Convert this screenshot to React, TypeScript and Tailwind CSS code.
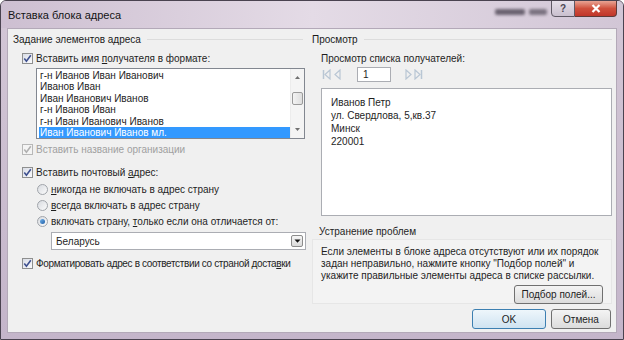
import React from "react";

function Check({ checked = false, disabled = false }: { checked?: boolean; disabled?: boolean }) {
  return (
    <span
      className={`w-[11px] h-[11px] shrink-0 border flex items-center justify-center ${
        disabled ? "border-[#b8b8b8] bg-[#f4f4f4]" : "border-[#8e8f8f] bg-gradient-to-br from-[#d9dde6] to-[#fbfbfd]"
      }`}
    >
      {checked && (
        <svg width="9" height="9" viewBox="0 0 9 9">
          <path
            d="M1.3 4.6 L3.4 7.2 L7.8 1.2"
            stroke={disabled ? "#b0b0b0" : "#3d4f8e"}
            strokeWidth="1.6"
            fill="none"
          />
        </svg>
      )}
    </span>
  );
}

function Radio({ checked = false }: { checked?: boolean }) {
  return (
    <span className="w-[11px] h-[11px] shrink-0 rounded-full border border-[#a0a4aa] bg-gradient-to-br from-[#d8dbe0] to-[#fbfbfb] flex items-center justify-center">
      {checked && <span className="w-[5px] h-[5px] rounded-full bg-gradient-to-br from-[#74b4ea] to-[#1f5fa8]" />}
    </span>
  );
}

function NavIcon({ kind }: { kind: "first" | "prev" | "next" | "last" }) {
  const c = "#b9c6d4";
  return (
    <svg width="9" height="11" viewBox="0 0 9 11">
      {kind === "first" && (
        <>
          <line x1="1.5" y1="1" x2="1.5" y2="10" stroke={c} strokeWidth="1.5" />
          <path d="M8 1 L3 5.5 L8 10 Z" fill="none" stroke={c} strokeWidth="1.2" />
        </>
      )}
      {kind === "prev" && <path d="M7 1 L2 5.5 L7 10 Z" fill="none" stroke={c} strokeWidth="1.2" />}
      {kind === "next" && <path d="M2 1 L7 5.5 L2 10 Z" fill="none" stroke={c} strokeWidth="1.2" />}
      {kind === "last" && (
        <>
          <path d="M1 1 L6 5.5 L1 10 Z" fill="none" stroke={c} strokeWidth="1.2" />
          <line x1="7.5" y1="1" x2="7.5" y2="10" stroke={c} strokeWidth="1.5" />
        </>
      )}
    </svg>
  );
}

const listItems = [
  "г-н Иванов Иван Иванович",
  "Иванов Иван",
  "Иван Иванович Иванов",
  "г-н Иванов Иван",
  "г-н Иван Иванович Иванов",
  "Иван Иванович Иванов мл.",
];

export default function App() {
  return (
    <div
      className="w-[624px] h-[340px] overflow-hidden relative rounded-t-[6px] border border-[#4a4350] bg-gradient-to-b from-[#d3c7d6] to-[#c4b5ca] flex flex-col text-[10px] text-[#1e1e1e]"
      style={{ fontFamily: "'Liberation Sans', Arial, sans-serif" }}
    >
      {/* Title bar */}
      <div className="h-[27px] shrink-0 relative bg-gradient-to-r from-[#cdbfd1] via-[#e4dbe6] to-[#d2c6d6]">
        <div className="pl-[7px] pt-[8px] text-[11px] text-[#141414] leading-[13px]">Вставка блока адреса</div>
        {/* blurred window behind the glass */}
        <div className="absolute left-[494px] top-[8px] flex gap-[4px] blur-[1.5px]">
          <div className="w-[30px] h-[6px] rounded-[2px] bg-[#6a6270]" />
          <div className="w-[18px] h-[6px] rounded-[2px] bg-[#7a7280]" />
        </div>
        <div className="absolute right-[6px] top-[-1px] flex">
          <div className="w-[24px] h-[17px] border border-[#5e5864] rounded-bl-[4px] bg-gradient-to-b from-[#e6dfe9] to-[#c9bfce] flex items-center justify-center text-[10px] font-bold text-[#4c4652]">
            ?
          </div>
          <div className="w-[42px] h-[17px] border border-[#5e3a38] border-l-0 rounded-br-[4px] bg-gradient-to-b from-[#e8a394] via-[#cf4f3c] to-[#c0352a] flex items-center justify-center">
            <svg width="10" height="9" viewBox="0 0 10 9">
              <path d="M1.5 1 L8.5 8 M8.5 1 L1.5 8" stroke="#ffffff" strokeWidth="2.2" />
            </svg>
          </div>
        </div>
      </div>

      {/* Content */}
      <div className="mx-[6px] h-[305px] shrink-0 bg-[#f0f0f0] border border-[#b3a9b8] flex">
        {/* Left column */}
        <div className="w-[299px] shrink-0 flex flex-col">
          <div className="h-[14px] mt-[3px] flex items-center pl-[5px]">
            <span className="text-[#1a1a1a]">Задание элементов адреса</span>
            <span className="flex-1 border-t border-[#dcdcdc] ml-[6px] mr-[4px]" />
          </div>
          <div className="h-[14px] mt-[5px] flex items-center pl-[14px] gap-[3px]">
            <Check checked />
            <span>
              Вставить имя <span className="underline">п</span>олучателя в формате:
            </span>
          </div>
          <div className="mt-[3px] ml-[28px] w-[269px] h-[71px] border border-[#828790] bg-white flex">
            <div className="flex-1 flex flex-col pt-[1px] pl-[2px]">
              {listItems.map((t, i) => (
                <div
                  key={t}
                  className={`h-[11.4px] leading-[11.4px] pl-[1px] whitespace-nowrap ${
                    i === listItems.length - 1 ? "bg-[#3399ff] text-white" : "text-[#1e1e1e]"
                  }`}
                >
                  {t}
                </div>
              ))}
            </div>
            <div className="w-[14px] shrink-0 bg-[#f4f4f4] border-l border-[#ececec] flex flex-col items-center">
              <svg width="7" height="14" viewBox="0 0 7 14" className="mt-[1px]">
                <path d="M1 9 L3.5 6 L6 9 Z" fill="#707070" />
              </svg>
              <div className="mt-[8px] w-[11px] h-[13px] border border-[#9a9a9a] rounded-[2px] bg-gradient-to-r from-[#f3f3f3] to-[#dedede]" />
              <div className="flex-1" />
              <svg width="7" height="14" viewBox="0 0 7 14" className="mb-[1px]">
                <path d="M1 5 L3.5 8 L6 5 Z" fill="#707070" />
              </svg>
            </div>
          </div>
          <div className="h-[14px] mt-[3px] flex items-center pl-[14px] gap-[3px] text-[#a0a0a0]">
            <Check checked disabled />
            <span>Вставить название организации</span>
          </div>
          <div className="h-[14px] mt-[9px] flex items-center pl-[14px] gap-[3px]">
            <Check checked />
            <span>
              Вставить почтовый <span className="underline">а</span>дрес:
            </span>
          </div>
          <div className="h-[14px] mt-[3px] flex items-center pl-[29px] gap-[3px]">
            <Radio />
            <span>
              <span className="underline">н</span>икогда не включать в адрес страну
            </span>
          </div>
          <div className="h-[14px] mt-[2px] flex items-center pl-[29px] gap-[3px]">
            <Radio />
            <span>
              <span className="underline">в</span>сегда включать в адрес страну
            </span>
          </div>
          <div className="h-[14px] mt-[2px] flex items-center pl-[29px] gap-[3px]">
            <Radio checked />
            <span>
              включать страну, <span className="underline">т</span>олько если она отличается от:
            </span>
          </div>
          <div className="mt-[4px] ml-[43px] w-[255px] h-[18px] border border-[#abadb3] bg-white flex items-center">
            <span className="pl-[4px] flex-1">Беларусь</span>
            <div className="w-[12px] h-[12px] mr-[2px] border border-[#8c8c8c] rounded-[2px] bg-gradient-to-b from-[#f6f6f6] to-[#dadada] flex items-center justify-center">
              <svg width="7" height="4" viewBox="0 0 7 4">
                <path d="M0.5 0.5 L6.5 0.5 L3.5 3.8 Z" fill="#111" />
              </svg>
            </div>
          </div>
          <div className="h-[14px] mt-[6px] flex items-center pl-[14px] gap-[3px] whitespace-nowrap">
            <Check checked />
            <span className="tracking-[-0.35px]">
              Форматировать адрес в соответствии со страной доста<span className="underline">в</span>ки
            </span>
          </div>
        </div>

        {/* Right column */}
        <div className="flex-1 flex flex-col">
          <div className="h-[14px] mt-[3px] flex items-center pl-[5px]">
            <span className="text-[#1a1a1a]">Просмотр</span>
            <span className="flex-1 border-t border-[#dcdcdc] ml-[6px] mr-[4px]" />
          </div>
          <div className="h-[14px] mt-[5px] flex items-center pl-[14px]">Просмотр списка получателей:</div>
          <div className="h-[15px] mt-[2px] flex items-center pl-[15px]">
            <NavIcon kind="first" />
            <span className="ml-[2px]">
              <NavIcon kind="prev" />
            </span>
            <div className="ml-[15px] w-[34px] h-[15px] border border-[#abadb3] bg-white flex items-center pl-[5px]">1</div>
            <span className="ml-[13px]">
              <NavIcon kind="next" />
            </span>
            <span className="ml-[1px]">
              <NavIcon kind="last" />
            </span>
          </div>
          <div className="mt-[6px] ml-[14px] w-[291px] h-[128px] border border-[#abadb3] bg-white pl-[9px] pt-[7px] leading-[13px]">
            <div>Иванов Петр</div>
            <div>ул. Свердлова, 5,кв.37</div>
            <div>Минск</div>
            <div>220001</div>
          </div>
          <div className="h-[14px] mt-[8px] flex items-center pl-[12px]">Устранение проблем</div>
          <div className="mt-[1px] ml-[5px] w-[300px] h-[65px] border border-[#e6e6e6] bg-[#f3f3f3] flex flex-col">
            <div className="pl-[8px] pt-[6px] leading-[12px]">
              <div>Если элементы в блоке адреса отсутствуют или их порядок</div>
              <div>задан неправильно, нажмите кнопку "Подбор полей" и</div>
              <div>укажите правильные элементы адреса в списке рассылки.</div>
            </div>
            <div className="flex justify-end pr-[8px] mt-[3px]">
              <div className="w-[89px] h-[19px] border border-[#707070] rounded-[3px] bg-gradient-to-b from-[#f4f4f4] to-[#dcdcdc] flex items-center justify-center">
                Подбор полей...
              </div>
            </div>
          </div>
          <div className="flex justify-end gap-[5px] pr-[5px] mt-[5px]">
            <div className="w-[74px] h-[20px] border border-[#3c7fb1] rounded-[3px] bg-gradient-to-b from-[#eef6fb] to-[#cfe3f1] flex items-center justify-center">
              OK
            </div>
            <div className="w-[60px] h-[20px] border border-[#707070] rounded-[3px] bg-gradient-to-b from-[#f4f4f4] to-[#dcdcdc] flex items-center justify-center">
              Отмена
            </div>
          </div>
        </div>
      </div>
    </div>
  );
}
